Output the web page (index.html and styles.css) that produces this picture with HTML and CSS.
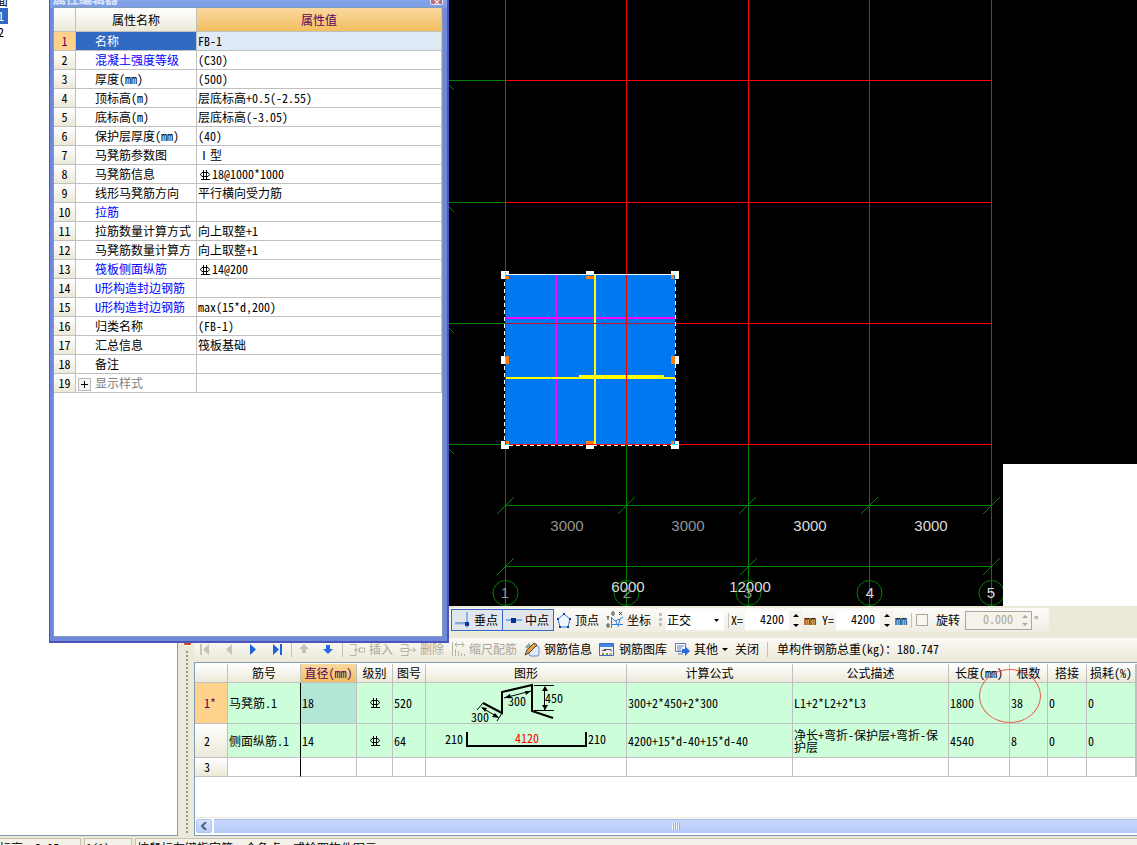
FILE: index.html
```html
<!DOCTYPE html>
<html lang="zh-CN">
<head>
    <meta charset="UTF-8">
    <meta name="viewport" content="width=device-width, initial-scale=1.0">
    <title>属性编辑器</title>
    <link rel="stylesheet" href="styles.css">
</head>
<body>
    <!-- 钢筋级别符号 -->
    <svg class="defs" width="0" height="0">
        <symbol id="rebar" viewBox="0 0 12 12">
            <path d="M3 3.500h6l1.500 2L9 7.500H3L1.500 5.500zM4.500 1v9M7.500 1v9M2 10.500h9" fill="none" stroke="currentColor"/>
        </symbol>
    </svg>

    <div class="workspace">
        <aside class="tree">
            <ul>
                <li>面</li>
                <li class="active">1</li>
                <li>2</li>
            </ul>
        </aside>

        <div class="splitter"><span class="pin"></span><span class="dots"></span></div>

        <main>
            <div class="canvas">
                <svg viewBox="194 0 943 606" preserveAspectRatio="xMinYMin slice">
                    <rect x="505" y="275" width="170" height="170" fill="#0078f0"/>
                    <g stroke="#008000" fill="none" shape-rendering="crispEdges">
                        <path d="M400 80.500H505M400 202.500H505M400 323.500H505M400 444.500H505"/>
                        <path d="M449 85l5 5M449 207l5 5M449 328l5 5M449 449l5 5"/>
                        <path d="M505.500 445V606M626.500 445V606M748.500 445V606M869.500 445V606M991.500 445V606"/>
                        <path d="M505 505.500H991M505 566.500H991"/>
                        <path d="M497 514l17-17M618 514l17-17M739 514l17-17M861 514l17-17M983 514l17-17"/>
                        <path d="M497 575l17-17M740 575l17-17M983 575l17-17"/>
                    </g>
                    <g stroke="#008000" fill="none">
                        <circle cx="505.500" cy="593" r="12.500"/>
                        <circle cx="626.500" cy="593" r="12.500"/>
                        <circle cx="748.500" cy="593" r="12.500"/>
                        <circle cx="869.500" cy="593" r="12.500"/>
                        <circle cx="991.500" cy="593" r="12.500"/>
                    </g>
                    <g shape-rendering="crispEdges">
                        <path d="M556 274v171" stroke="#f0f" stroke-width="2"/>
                        <path d="M504 318h171" stroke="#f0f" stroke-width="2"/>
                        <path d="M595 275v170M505 378h170" stroke="#ff0" stroke-width="2"/>
                        <path d="M579 376h85" stroke="#ff0" stroke-width="2"/>
                    </g>
                    <g stroke="#f00" fill="none" shape-rendering="crispEdges">
                        <path d="M505 80.500H992M505 202.500H992M675 323.500H992M505 444.500H992"/>
                        <path d="M505.500 0V445M626.500 0V445M748.500 0V445M869.500 0V445M991.500 0V445"/>
                        <path d="M505 323.500H675" stroke="#c01030"/>
                    </g>
                    <path d="M505 274.500H675" stroke="#fff" shape-rendering="crispEdges"/>
                    <path d="M504.500 275V445.500H675M675.500 445V275" fill="none" stroke="#fff" stroke-dasharray="4 3" shape-rendering="crispEdges"/>
                    <g fill="#fff">
                        <path d="M501 271h8v4h-4v4h-4zM586 271h8v4h-8zM671 271h8v8h-4v-4h-4z"/>
                        <path d="M501 356h4v8h-4zM675 356h4v8h-4z"/>
                        <path d="M501 441h4v4h4v4h-8zM586 445h8v4h-8zM675 441h4v8h-8v-4h4z"/>
                    </g>
                    <g fill="#ff8010">
                        <path d="M506 276h3v3h-3zM586 276h8v3h-8zM671 275h3v4h-3zM506 356h3v8h-3zM671 356h4v8h-4z"/>
                        <path d="M506 441h3v3h-3zM586 441h8v3h-8zM671 441h3v3h-3z"/>
                    </g>
                    <path d="M505.500 272v7M505.500 357v7M506 444.500h3M671 444.500h7" stroke="#0ff" shape-rendering="crispEdges"/>
                    <g class="dim">
                        <text x="567" y="531" class="dark">3000</text>
                        <text x="688" y="531" class="dark">3000</text>
                        <text x="810" y="531">3000</text>
                        <text x="931" y="531">3000</text>
                        <text x="628" y="592">6000</text>
                        <text x="750" y="592">12000</text>
                        <text x="505" y="598" class="dark">1</text>
                        <text x="627" y="598" class="dark">2</text>
                        <text x="748" y="598" class="dark">3</text>
                        <text x="870" y="598">4</text>
                        <text x="991" y="598">5</text>
                    </g>
                    <rect x="1003" y="464" width="600" height="142" fill="#fff"/>
                </svg>
            </div>

            <div class="snapbar">
                <div class="strip">
                    <button class="tool on"><svg width="18" height="18"><path d="M13 1v16" stroke="#8db4ea" stroke-width="2"/><path d="M1 12h12" stroke="#2a62c0"/><path d="M1 13h15" stroke="#8db4ea"/><rect x="11" y="11" width="4" height="4" fill="#0a3c9c"/></svg>垂点</button>
                    <button class="tool on"><svg width="18" height="18"><path d="M1 9h16" stroke="#7aa8e8" stroke-width="2"/><rect x="6" y="7" width="5" height="5" fill="#0a2c8c"/></svg>中点</button>
                    <button class="tool"><svg width="16" height="18"><path d="M8 3l6 5-2 8H4L2 8z" fill="#eef6ff" stroke="#3a7ad0"/><path d="M7 2h2v2H7zM13 7h2v2h-2zM11 15h2v2h-2zM3 15h2v2H3zM1 7h2v2H1z" fill="#0a3c9c"/></svg>顶点</button>
                    <button class="tool"><svg width="18" height="18"><path d="M5.500 6v11M5 13.500h12M5 6l4 4 5-2 3-2M10 10l1 4M14 8l-2 8" fill="none" stroke="#2a82e0"/><path d="M1 5l1 2 1-2M2 7v2M1 13h2v3H1zM6 1h2v3H6zM13 1l3 3M16 1l-3 3" fill="none" stroke="#444"/></svg>坐标</button>
                </div>
                <div class="strip">
                    <span class="grip"></span>
                    <select class="mode" aria-label="正交"><option>正交</option></select>
                    <span class="sep"></span>
                    <label for="px">X=</label>
                    <span class="spin"><input id="px" type="text" value="4200"><i><b class="up"></b><b class="down"></b></i></span>
                    <span class="unit">mm</span>
                    <label for="py">Y=</label>
                    <span class="spin"><input id="py" type="text" value="4200"><i><b class="up"></b><b class="down"></b></i></span>
                    <span class="unit">mm</span>
                    <span class="sep"></span>
                    <input type="checkbox" id="rot">
                    <label for="rot" class="rotate">旋转</label>
                    <span class="spin off"><input type="text" value="0.000" aria-label="旋转角度" disabled><i><b class="up"></b><b class="down"></b></i></span>
                    <span class="deg">°</span>
                </div>
            </div>

            <div class="editbar">
                <button class="nav" aria-label="首行"><svg width="12" height="14"><path d="M1 2h2v11H1zM10 2v11L4 7.500z" fill="#c6c5bd"/></svg></button>
                <button class="nav" aria-label="上一行"><svg width="12" height="14"><path d="M9 2v11L3 7.500z" fill="#c6c5bd"/></svg></button>
                <button class="nav" aria-label="下一行"><svg width="12" height="14"><path d="M3 2v11l6-5.500z" fill="#1c62dc"/></svg></button>
                <button class="nav" aria-label="末行"><svg width="12" height="14"><path d="M9 2h2v11H9zM2 2v11l6-5.500z" fill="#1c62dc"/></svg></button>
                <span class="sep"></span>
                <button class="nav" aria-label="上移"><svg width="12" height="14"><path d="M6 2l5 5H8v4H4V7H1z" fill="#c6c5bd"/></svg></button>
                <button class="nav" aria-label="下移"><svg width="12" height="14"><path d="M6 12l5-5H8V3H4v4H1z" fill="#2a6ae0"/></svg></button>
                <span class="sep"></span>
                <button class="act" disabled><svg width="16" height="16"><path d="M1 3.500h6v3M1 14.500h6v-3M5 9h5M10.500 7v4h5V7zM8 7L5.500 9 8 11" fill="none" stroke="#b5b3a5"/></svg>插入</button>
                <button class="act" disabled><svg width="16" height="16"><path d="M1 3.500h7v3M1 14.500h7v-3M1 7.500h8v3H1zM10 9h5M13 6.500L15.500 9 13 11.500" fill="none" stroke="#b5b3a5"/></svg>删除</button>
                <button class="act tight" disabled><svg width="16" height="16"><path d="M1.500 1v14M4 3.500h9M6 1L4 3.500 6 6M11 1l2 2.500L11 6M4.500 8v7M7.500 10v5M10.500 12v3M13.500 13v2" fill="none" stroke="#b5b3a5"/></svg>缩尺配筋</button>
                <button class="act"><svg width="16" height="16"><rect x="5" y="5" width="10" height="10" rx="2" fill="#dfeafc" stroke="#6a8cd0"/><path d="M1 14L3 9 10 2l3 2-8 8z" fill="#f0a030" stroke="#444"/><path d="M1 6l4-4 2 2-4 4z" fill="#8aa"/></svg>钢筋信息</button>
                <button class="act"><svg width="16" height="16"><path d="M.5 2.500h14v12H.5z" fill="#eef4ff" stroke="#3a6ac8"/><path d="M1 3h13v3H1z" fill="#4a84e0"/><path d="M3 9.500h4M5 8.500h7v2" stroke="#555" fill="none"/><path d="M3 12h2v2H3z" fill="#e06030"/><path d="M7 12h2v2H7z" fill="#60b040"/><path d="M10 12h3v2h-3z" fill="#f0b030"/></svg>钢筋图库</button>
                <button class="act"><svg width="16" height="16"><path d="M1.500 2.500h10v8h-10z" fill="#fff" stroke="#5a7ab8"/><path d="M3 5h7M3 7h5M3 9h4M4 13h5" stroke="#5a7ab8"/><path d="M8 8h3V5l5 5-5 5v-3H8z" fill="#2a6ae0"/></svg>其他<b class="down"></b></button>
                <button class="act close">关闭</button>
                <span class="sep"></span>
                <span class="total">单构件钢筋总重(kg)：180.747</span>
            </div>

            <div class="bars">
                <table>
                    <colgroup>
                        <col class="w33"><col class="w73"><col class="w56"><col class="w36"><col class="w33"><col class="w201"><col class="w166"><col class="w156"><col class="w61"><col class="w38"><col class="w39"><col class="w49"><col>
                    </colgroup>
                    <thead>
                        <tr><th></th><th>筋号</th><th class="hot">直径(mm)</th><th>级别</th><th>图号</th><th>图形</th><th>计算公式</th><th>公式描述</th><th>长度(mm)</th><th>根数</th><th>搭接</th><th>损耗(%)</th><th></th></tr>
                    </thead>
                    <tbody>
                        <tr class="green tall">
                            <th class="cur">1*</th><td class="mark">马凳筋.1</td><td class="sel">18</td>
                            <td class="mid"><svg width="12" height="12"><use href="#rebar"/></svg></td><td>520</td>
                            <td class="shape"><svg width="120" height="40" viewBox="467 683 120 40">
                                <path d="M483 703l19 10v-21l30-7v26l21 7" fill="none" stroke="#000" stroke-width="2"/>
                                <path d="M534 685.500h20M534 710.500h20M544.500 687v23M504 698l27-7M482 708l16 9M483 703l-6 7M502 713l-5 8" fill="none" stroke="#000"/>
                                <path d="M542 691l3-5 3 5zM542 705l3 5 3-5zM504 698l6-4 1 4zM531 691l-6 0 1 4zM481 707l6 1-2 4zM499 718l-7-1 3-4z"/>
                                <text x="471" y="722">300</text><text x="508" y="706">300</text><text x="545" y="703">450</text>
                            </svg></td>
                            <td>300+2*450+2*300</td><td>L1+2*L2+2*L3</td><td>1800</td><td>38</td><td>0</td><td>0</td><td></td>
                        </tr>
                        <tr class="green">
                            <th>2</th><td class="mark">侧面纵筋.1</td><td>14</td>
                            <td class="mid"><svg width="12" height="12"><use href="#rebar"/></svg></td><td>64</td>
                            <td class="shape"><svg width="166" height="30" viewBox="443 726 166 30">
                                <path d="M466 732v14h119v-14" fill="none" stroke="#000" stroke-width="2"/>
                                <text x="444" y="744">210</text><text x="514" y="743" fill="#f00">4120</text><text x="587" y="744">210</text>
                            </svg></td>
                            <td>4200+15*d-40+15*d-40</td><td class="wrap">净长+弯折-保护层+弯折-保护层</td><td>4540</td><td>8</td><td>0</td><td>0</td><td></td>
                        </tr>
                        <tr>
                            <th>3</th><td class="mark"></td><td></td><td></td><td></td><td></td><td></td><td></td><td></td><td></td><td></td><td></td><td></td>
                        </tr>
                    </tbody>
                </table>
                <span class="ring"></span>
                <div class="scroll">
                    <button aria-label="向左滚动"><svg width="8" height="8"><path d="M6 0L2 4l4 4" fill="none" stroke="#4d6185" stroke-width="2"/></svg></button>
                    <div class="thumb"><span></span></div>
                </div>
            </div>
        </main>
    </div>

    <footer class="status">
        <span class="s1">标高：3.05</span>
        <span class="s2">1(1)</span>
        <span class="s3">按鼠标左键指定第一个角点，或拾取构件图元</span>
    </footer>

    <section class="dialog">
        <header><h1>属性编辑器</h1><button aria-label="关闭">×</button></header>
        <div class="inner">
            <table>
                <colgroup><col class="w22"><col class="w121"><col></colgroup>
                <thead>
                    <tr><th></th><th>属性名称</th><th class="hot">属性值</th></tr>
                </thead>
                <tbody>
                    <tr class="cur"><th>1</th><td>名称</td><td>FB-1</td></tr>
                    <tr><th>2</th><td class="blue">混凝土强度等级</td><td>(C30)</td></tr>
                    <tr><th>3</th><td>厚度(mm)</td><td>(500)</td></tr>
                    <tr><th>4</th><td>顶标高(m)</td><td>层底标高+0.5(-2.55)</td></tr>
                    <tr><th>5</th><td>底标高(m)</td><td>层底标高(-3.05)</td></tr>
                    <tr><th>6</th><td>保护层厚度(mm)</td><td>(40)</td></tr>
                    <tr><th>7</th><td>马凳筋参数图</td><td>Ⅰ型</td></tr>
                    <tr><th>8</th><td>马凳筋信息</td><td><svg width="14" height="12"><use href="#rebar" width="14" height="12"/></svg>18@1000*1000</td></tr>
                    <tr><th>9</th><td>线形马凳筋方向</td><td>平行横向受力筋</td></tr>
                    <tr><th>10</th><td class="blue">拉筋</td><td></td></tr>
                    <tr><th>11</th><td>拉筋数量计算方式</td><td>向上取整+1</td></tr>
                    <tr><th>12</th><td>马凳筋数量计算方</td><td>向上取整+1</td></tr>
                    <tr><th>13</th><td class="blue">筏板侧面纵筋</td><td><svg width="14" height="12"><use href="#rebar" width="14" height="12"/></svg>14@200</td></tr>
                    <tr><th>14</th><td class="blue">U形构造封边钢筋</td><td></td></tr>
                    <tr><th>15</th><td class="blue">U形构造封边钢筋</td><td>max(15*d,200)</td></tr>
                    <tr><th>16</th><td>归类名称</td><td>(FB-1)</td></tr>
                    <tr><th>17</th><td>汇总信息</td><td>筏板基础</td></tr>
                    <tr><th>18</th><td>备注</td><td></td></tr>
                    <tr><th>19</th><td class="grey"><button class="plus" aria-label="展开"></button>显示样式</td><td></td></tr>
                </tbody>
            </table>
        </div>
    </section>
</body>
</html>
```

FILE: styles.css
```css
* { box-sizing: border-box; }
body { margin: 0; height: 100vh; overflow: hidden; position: relative; display: flex; flex-direction: column; background: #ece9d8; color: #000; }
body, button, input, select { font: 12px/14px "Noto Sans Mono CJK SC", "Noto Sans CJK SC", monospace; }
button { padding: 0; border: none; background: none; color: #000; white-space: nowrap; }
.defs { position: absolute; }

.workspace { flex: 1; min-height: 0; display: flex; }

/* left tree */
.tree { width: 178px; background: #fff; border-right: 1px solid #7f9db9; border-bottom: 1px solid #7f9db9; }
.tree ul { list-style: none; margin: 0; padding: 0; width: 8px; overflow: hidden; }
.tree li { height: 16px; line-height: 16px; direction: rtl; padding-right: 4px; }
.tree li:first-child { height: 8px; line-height: 2px; padding-right: 0; }
.tree .active { background: #316ac5; color: #fff; }

.splitter { width: 16px; display: flex; flex-direction: column; align-items: center; padding: 638px 0 3px 2px; }
.pin { width: 9px; height: 8px; margin-bottom: 5px; background: #d8401c; border: 1px solid #fff; border-radius: 2px; }
.dots { flex: 1; width: 2px; background: repeating-linear-gradient(#9a978a 0 2px, #ece9d8 2px 4px); }

main { flex: 1; min-width: 0; display: flex; flex-direction: column; }

/* drawing */
.canvas { flex: 1; min-height: 0; background: #000; overflow: hidden; }
.canvas svg { display: block; width: 100%; height: 100%; }
.dim text { font: 15px "Liberation Sans", sans-serif; fill: #dcdcdc; text-anchor: middle; }
.dim .dark { fill: #949494; }

/* snap toolbar */
.snapbar { height: 32px; padding: 2px 0 0 255px; display: flex; align-items: flex-start; }
.strip { height: 24px; display: flex; align-items: center; padding: 0 2px; background: linear-gradient(#fcfbf9, #f0ede2); border-radius: 0 4px 4px 0; }
.strip + .strip { padding-right: 10px; }
.tool { height: 22px; display: flex; align-items: center; gap: 3px; padding: 0 4px 0 3px; }
.tool.on { width: 52px; margin-right: -1px; gap: 2px; padding: 0 3px 0 2px; border: 1px solid #316ac5; background: #e1e6ec; }
.grip { width: 3px; height: 15px; margin: 0 4px 0 0; background: repeating-linear-gradient(#c1beb0 0 3px, transparent 3px 5px); }
.mode { width: 58px; height: 19px; border: 1px solid #fff; border-radius: 0; padding: 0; appearance: none; background: #fff url("data:image/svg+xml,%3Csvg xmlns='http://www.w3.org/2000/svg' width='5' height='3'%3E%3Cpath d='M0 0h5L2.5 3z'/%3E%3C/svg%3E") right 4px center no-repeat; }
.sep { width: 1px; height: 15px; margin: 0 2px 0 4px; background: #c5c2b2; }
.spin { display: flex; height: 19px; margin: 0 2px; background: #fff; }
.spin input { width: 44px; border: none; padding: 0 5px 2px 0; background: none; text-align: right; }
.spin i { width: 13px; display: flex; flex-direction: column; justify-content: space-between; align-items: center; padding: 3px 0; background: #f4f2ea; }
.up { border: 3px solid transparent; border-bottom-color: currentColor; border-top: none; }
.down { border: 3px solid transparent; border-top-color: currentColor; border-bottom: none; }
.unit { margin-right: 6px; }
.unit + .sep { margin: 0 4px 0 -2px; }
.strip input[type=checkbox] { appearance: none; width: 12px; height: 12px; margin: 0; border: 1px solid #aca899; background: #f8f6f0; }
.rotate { margin: 0 3px 0 8px; }
.spin.off { border: 1px solid #aca899; background: #f4f2ea; color: #aca899; }
.spin.off input { width: 52px; color: #aca899; }
.deg { color: #77756a; }

/* edit toolbar */
.editbar { height: 24px; display: flex; align-items: center; padding: 0 5px 2px; background: linear-gradient(#fbfaf6, #ece9d8); white-space: nowrap; }
.nav { width: 12px; height: 14px; margin-right: 12px; }
.nav svg, .act svg, .tool svg { display: block; flex: none; }
.editbar .sep { margin: 0 6px 0 -4px; }
.editbar .act { display: flex; align-items: center; gap: 4px; margin-right: 7px; }
.editbar .act.tight { gap: 2px; }
.act:disabled { color: #aca899; }
.editbar .close + .sep { margin: 0 9px 0 1px; }

/* grids */
table { border-collapse: separate; border-spacing: 0; table-layout: fixed; }
th, td { border-right: 1px solid #c0c0c0; border-bottom: 1px solid #c0c0c0; padding: 0 0 0 1px; font-weight: normal; text-align: left; white-space: nowrap; overflow: hidden; }
th { background: linear-gradient(#fff, #ece9d8); padding: 0; text-align: center; }
th.hot { background: linear-gradient(#fad8a0, #f2bf60); color: #5a005a; }
.w22 { width: 22px; }
.w33 { width: 33px; }
.w36 { width: 36px; }
.w38 { width: 38px; }
.w39 { width: 39px; }
.w49 { width: 49px; }
.w56 { width: 56px; }
.w61 { width: 61px; }
.w73 { width: 73px; }
.w121 { width: 121px; }
.w156 { width: 156px; }
.w166 { width: 166px; }
.w201 { width: 201px; }

.bars { position: relative; height: 174px; border: 1px solid #7f9db9; border-right: none; background: #fff; padding-top: 1px; display: flex; flex-direction: column; overflow: hidden; }
.bars table { width: 100%; }
.bars thead tr, .bars tbody tr { height: 19px; }
.bars tbody tr.green { height: 34px; }
.bars tbody tr.tall { height: 41px; }
.green td { background: #ccffd9; }
.green .sel { background: #b4e6d6; }
.bars .mark { border-right-color: #000; }
.bars th.cur { background: #ffd28c; color: #5a005a; }
.bars th:first-child { padding-right: 8px; }
.bars .cur:first-child { padding-right: 2px; }
.mid { text-align: center; }
.mid svg, .shape svg { display: block; margin: 0 auto; }
.shape text { font-size: 12px; }
.bars .wrap { white-space: normal; line-height: 12px; }
.ring { position: absolute; left: 784px; top: 6px; width: 62px; height: 54px; border: 1px solid #e8604c; border-radius: 50%; }
.scroll { height: 18px; margin-top: auto; display: flex; gap: 2px; padding: 1px 0 2px 1px; border-top: 1px solid #eceada; }
.scroll button { width: 16px; border: 1px solid #b0c4f4; border-radius: 2px; background: linear-gradient(#d8e2fd, #b8ccf8); display: flex; align-items: center; justify-content: center; }
.thumb { flex: 1; background: linear-gradient(#c9d6fc, #b4cafa); border-top: 1px solid #a8bce8; display: flex; align-items: center; justify-content: center; }
.thumb span { width: 8px; height: 7px; background: repeating-linear-gradient(90deg, #eef4fe 0 1px, #8cb0f8 1px 2px); }

.status { height: 9px; padding-top: 2px; display: flex; gap: 3px; overflow: hidden; white-space: nowrap; }
.status span { height: 20px; border: 1px solid #c5c2b2; padding: 2px 1px; background: #f4f2e8; }
.status .s1 { width: 82px; margin-left: -1px; border-left: none; padding: 2px 0; }
.status .s2 { width: 48px; }
.status .s3 { flex: 1; border-right: none; }

/* floating window */
.dialog { position: absolute; left: 49px; top: 0; width: 400px; height: 643px; display: flex; flex-direction: column; padding: 0 5px 5px 4px; background: #7088dc; border: 1px solid #4c54b8; border-top: none; border-width: 0 2px 2px 1px; }
.dialog header { height: 8px; margin: 0 -5px 0 -4px; padding: 0 3px; display: flex; justify-content: space-between; background: linear-gradient(#86a6ea, #7a9ae4); overflow: hidden; }
.dialog h1 { margin: -9px 0 0; font-size: 13px; line-height: 14px; font-weight: bold; color: #dce6fa; }
.dialog header button { width: 13px; height: 5px; margin-right: 1px; background: #b86a80; border: 1px solid #dfe4f6; border-top: none; border-radius: 0 0 2px 2px; color: #fff; line-height: 2px; overflow: hidden; }
.inner { flex: 1; background: #fff; outline: 1px solid #7f9db9; }
.dialog table { width: 388px; }
.dialog thead tr { height: 24px; }
.dialog tbody tr { height: 19px; }
.dialog td:nth-child(2) { padding-left: 19px; }
.dialog td svg { vertical-align: -2px; }
.blue { color: #00f; }
.grey { color: #808080; }
.dialog .cur th { background: #ffd28c; color: #5a005a; }
.dialog .cur td { background: #e0eaf6; }
.dialog .cur td:nth-child(2) { background: #316ac5; color: #fff; }
.plus { width: 13px; height: 13px; margin: 0 4px 0 -17px; vertical-align: -2px; border: 1px solid #b8b8b8; background: linear-gradient(#000, #000) center / 7px 1px no-repeat, linear-gradient(#000, #000) center / 1px 7px no-repeat, #f4f4f4; }
```
